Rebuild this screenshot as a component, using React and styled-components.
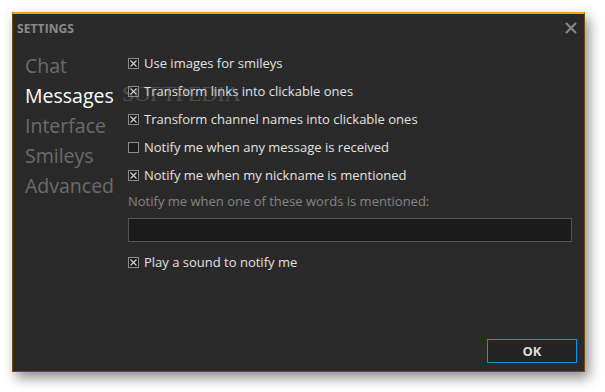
import React from 'react';
import styled, { createGlobalStyle } from 'styled-components';

const Global = createGlobalStyle`
  html, body { margin: 0; padding: 0; background: #ffffff; }
  body { font-family: "Open Sans", "Noto Sans", sans-serif; }
`;

const Page = styled.div`
  padding: 12px;
  width: 605px;
  height: 392px;
  box-sizing: border-box;
`;

const Window = styled.div`
  position: relative;
  width: 573px;
  height: 360px;
  box-sizing: border-box;
  background: #2a2a2a;
  border: 1px solid #6e4c12;
  border-top: 2px solid #f5a300;
  box-shadow: 4px 6px 12px rgba(0, 0, 0, 0.45);
  display: flex;
  flex-direction: column;
`;

const TitleBar = styled.div`
  height: 28px;
  display: flex;
  align-items: center;
  justify-content: space-between;
  padding: 0 6px 0 4px;
`;

const Title = styled.div`
  font-size: 12px;
  font-weight: 700;
  color: #8a8a8a;
  letter-spacing: 0.1px;
`;

const Close = styled.div`
  width: 14px;
  height: 14px;
  display: flex;
  svg { display: block; }
`;

const Body = styled.div`
  flex: 1;
  display: grid;
  grid-template-columns: 103px 1fr;
  padding: 9px 12px 0 12px;
  position: relative;
`;

const Nav = styled.div`
  display: flex;
  flex-direction: column;
`;

const NavItem = styled.div`
  height: 30px;
  line-height: 30px;
  font-size: 19.5px;
  color: ${p => (p.$active ? '#ffffff' : '#6c6c6c')};
  white-space: nowrap;
`;

const Content = styled.div`
  display: flex;
  flex-direction: column;
  margin-top: -2px;
`;

const Row = styled.div`
  height: 28px;
  display: flex;
  align-items: center;
  gap: 5px;
  font-size: 13px;
  color: #e2e2e2;
  white-space: nowrap;
`;

const Box = styled.span`
  width: 11px;
  height: 11px;
  display: inline-flex;
  svg { display: block; }
`;

const Label = styled.div`
  height: 26px;
  display: flex;
  align-items: center;
  font-size: 13px;
  color: #858585;
  margin-top: -1px;
`;

const Input = styled.div`
  height: 24px;
  box-sizing: border-box;
  margin-top: 4px;
  background: #1b1b1b;
  border: 1px solid #555555;
`;

const SoundRow = styled(Row)`
  margin-top: 6px;
`;

const Footer = styled.div`
  display: flex;
  justify-content: flex-end;
  padding: 0 7px 8px 0;
`;

const OkButton = styled.div`
  width: 90px;
  height: 24px;
  box-sizing: border-box;
  border: 1px solid #1692dc;
  background: #242424;
  color: #dcdcdc;
  font-weight: 700;
  font-size: 13px;
  display: flex;
  align-items: center;
  justify-content: center;
`;

const Watermark = styled.div`
  position: absolute;
  left: 109px;
  top: 40px;
  font-family: "Liberation Serif", serif;
  font-size: 22px;
  line-height: 24px;
  color: rgba(140, 140, 140, 0.4);
  pointer-events: none;
`;

const Check = ({ checked }) => (
  <Box>
    <svg width="11" height="11" viewBox="0 0 11 11">
      <rect x="0.5" y="0.5" width="10" height="10" fill="#1c1c1c" stroke="#8c8c8c" />
      {checked && (
        <path d="M2.5 2.5 L8.5 8.5 M8.5 2.5 L2.5 8.5" stroke="#d8d8d8" strokeWidth="1.1" />
      )}
    </svg>
  </Box>
);

const options = [
  { text: 'Use images for smileys', checked: true },
  { text: 'Transform links into clickable ones', checked: true },
  { text: 'Transform channel names into clickable ones', checked: true },
  { text: 'Notify me when any message is received', checked: false },
  { text: 'Notify me when my nickname is mentioned', checked: true },
];

const navItems = ['Chat', 'Messages', 'Interface', 'Smileys', 'Advanced'];

export default function App() {
  return (
    <Page>
      <Global />
      <Window>
        <TitleBar>
          <Title>SETTINGS</Title>
          <Close>
            <svg width="14" height="14" viewBox="0 0 14 14">
              <path d="M2 2 L12 12 M12 2 L2 12" stroke="#8a8a8a" strokeWidth="2" />
            </svg>
          </Close>
        </TitleBar>
        <Body>
          <Nav>
            {navItems.map(n => (
              <NavItem key={n} $active={n === 'Messages'}>{n}</NavItem>
            ))}
          </Nav>
          <Content>
            {options.map(o => (
              <Row key={o.text}>
                <Check checked={o.checked} />
                {o.text}
              </Row>
            ))}
            <Label>Notify me when one of these words is mentioned:</Label>
            <Input />
            <SoundRow>
              <Check checked />
              Play a sound to notify me
            </SoundRow>
          </Content>
          <Watermark>SOFTPEDIA</Watermark>
        </Body>
        <Footer>
          <OkButton>OK</OkButton>
        </Footer>
      </Window>
    </Page>
  );
}
